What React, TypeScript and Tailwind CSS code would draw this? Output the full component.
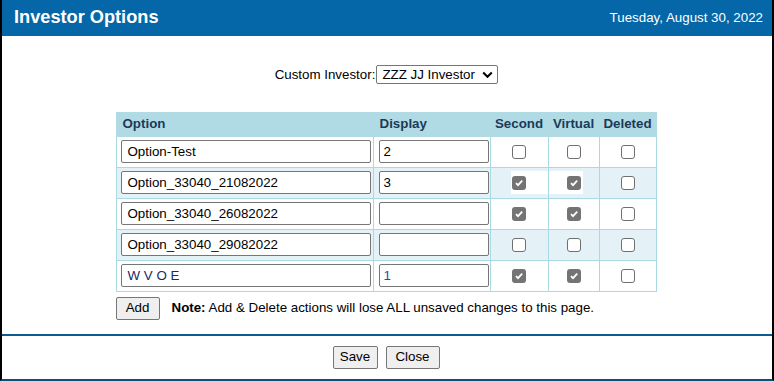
import React from "react";

type Row = { name: string; display: string; second: boolean; virtual: boolean; deleted: boolean; nameColor?: string; dispColor?: string };

const rows: Row[] = [
  { name: "Option-Test", display: "2", second: false, virtual: false, deleted: false },
  { name: "Option_33040_21082022", display: "3", second: true, virtual: true, deleted: false },
  { name: "Option_33040_26082022", display: "", second: true, virtual: true, deleted: false },
  { name: "Option_33040_29082022", display: "", second: false, virtual: false, deleted: false },
  { name: "W V O E", display: "1", second: true, virtual: true, deleted: false, nameColor: "text-[#1c2a66]", dispColor: "text-[#1d4fa8]" },
];

function Box({ checked }: { checked: boolean }) {
  if (checked) {
    return (
      <span className="relative inline-flex w-[14px] h-[14px] rounded-[3px] bg-[#747474] items-center justify-center">
        <svg width="10" height="10" viewBox="0 0 10 10">
          <path d="M2 5.2 L4 7.2 L8.2 2.6" stroke="white" strokeWidth="1.8" fill="none" />
        </svg>
      </span>
    );
  }
  return <span className="relative inline-block w-[14px] h-[14px] rounded-[3px] border border-[#6f6f6f] bg-white" />;
}

export default function App() {
  return (
    <div
      className="w-[774px] h-[381px] bg-white border-l-2 border-r-2 border-black border-b-2 border-b-[#0b4f7c] flex flex-col text-[13.33px] text-black"
      style={{ fontFamily: '"Liberation Sans", Arial, sans-serif' }}
    >
      <div className="h-[36px] bg-[#0567a7] flex items-center justify-between pl-[12px] pr-[9px] text-white">
        <div className="text-[18.2px] font-bold">Investor Options</div>
        <div className="text-[13.33px]">Tuesday, August 30, 2022</div>
      </div>
      <div className="flex justify-center items-center mt-[29px] pr-[1px]">
        <span>Custom Investor:</span>
        <div className="ml-[1px] h-[19px] w-[122px] border border-[#767676] rounded-[2px] flex items-center justify-between pl-[5px] pr-[4px]">
          <span>ZZZ JJ Investor</span>
          <svg width="11" height="8" viewBox="0 0 11 8">
            <path d="M1.2 1.5 L5.5 5.8 L9.8 1.5" stroke="black" strokeWidth="2" fill="none" />
          </svg>
        </div>
      </div>
      <div className="flex justify-center mt-[27px] pr-[2px]">
        <div>
          <table className="border-collapse w-[541px]">
            <thead>
              <tr className="bg-[#b1dbe4] h-[24px] text-[#1b3a57] font-bold">
                <th className="text-left pl-[6px] w-[257px] border border-[#b1dbe4]">Option</th>
                <th className="text-left pl-[6px] w-[117px] border border-[#b1dbe4]">Display</th>
                <th className="w-[58px] border border-[#b1dbe4]">Second</th>
                <th className="w-[51px] border border-[#b1dbe4]">Virtual</th>
                <th className="w-[57px] border border-[#b1dbe4]">Deleted</th>
              </tr>
            </thead>
            <tbody>
              {rows.map((r, i) => (
                <tr key={i} className={`h-[31px] ${i % 2 === 1 ? "bg-[#e4f2f7]" : "bg-white"}`}>
                  <td className="border border-[#a9d9e3] pl-[4px]">
                    <div className={`w-[250px] h-[23px] bg-white border border-[#767676] rounded-[2px] pl-[6px] flex items-center ${r.nameColor ?? ""}`}>
                      {r.name}
                    </div>
                  </td>
                  <td className="border border-[#a9d9e3] pl-[5px]">
                    <div className={`w-[110px] h-[23px] bg-white border border-[#767676] rounded-[2px] pl-[4px] flex items-center ${r.dispColor ?? ""}`}>
                      {r.display}
                    </div>
                  </td>
                  <td className="border border-[#a9d9e3] p-0">
                    <div className="relative flex justify-center items-center h-[30px]">
                      {i === 1 && <span className="absolute left-[20px] right-0 top-[3px] h-[23px] bg-white" />}
                      <Box checked={r.second} />
                    </div>
                  </td>
                  <td className="border border-[#a9d9e3] p-0">
                    <div className="relative flex justify-center items-center h-[30px]">
                      {i === 1 && <span className="absolute left-0 right-[16px] top-[3px] h-[23px] bg-white" />}
                      <Box checked={r.virtual} />
                    </div>
                  </td>
                  <td className="border border-[#a9d9e3] p-0">
                    <div className="flex justify-center items-center h-[30px]">
                      <Box checked={r.deleted} />
                    </div>
                  </td>
                </tr>
              ))}
            </tbody>
          </table>
          <div className="flex items-center mt-[5px]">
            <button className="h-[23px] w-[44px] bg-[#efefef] border border-[#767676] rounded-[2px]">Add</button>
            <span className="ml-[12px]">
              <b>Note:</b> Add &amp; Delete actions will lose ALL unsaved changes to this page.
            </span>
          </div>
        </div>
      </div>
      <div className="mt-[14px] border-t-2 border-[#0b5c92]" />
      <div className="flex justify-center gap-[8px] mt-[10px] pr-[2px]">
        <button className="h-[23px] w-[45px] bg-[#efefef] border border-[#767676] rounded-[2px]">Save</button>
        <button className="h-[23px] w-[54px] bg-[#efefef] border border-[#767676] rounded-[2px]">Close</button>
      </div>
    </div>
  );
}
